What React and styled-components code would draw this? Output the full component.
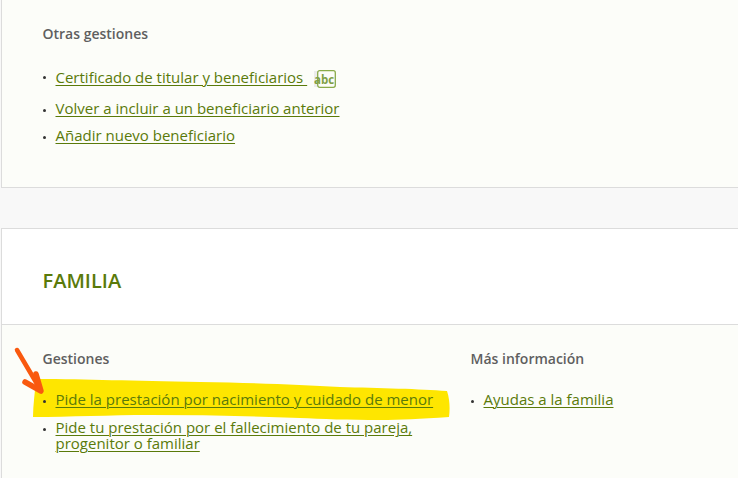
import React from "react";
import styled, { createGlobalStyle } from "styled-components";

const Global = createGlobalStyle`
  html, body { margin: 0; padding: 0; background: #f8f8f8; }
  body { font-family: "Open Sans", "Noto Sans", sans-serif; overflow: hidden; }
`;
const Page = styled.div`
  width: 738px;
  height: 478px;
  overflow: hidden;
  padding-left: 1px;
  box-sizing: border-box;
`;
const TopCard = styled.section`
  height: 188px;
  box-sizing: border-box;
  width: 760px;
  background: #fcfdf9;
  border-left: 1px solid #dcdcdc;
  border-bottom: 1px solid #dcdcdc;
  padding: 25px 0 0 40.5px;
`;
const Card = styled.section`
  margin-top: 40px;
  width: 760px;
  border: 1px solid #dcdcdc;
  border-right: 0;
  background: #fcfdf9;
  height: 300px;
`;
const CardHeader = styled.header`
  height: 96px;
  box-sizing: border-box;
  background: #fff;
  border-bottom: 1px solid #dcdcdc;
  padding: 38px 0 0 40.5px;
`;
const Title = styled.h2`
  margin: 0;
  font-size: 20px;
  line-height: 28px;
  font-weight: 600;
  color: #5a7a0a;
`;
const Columns = styled.div`
  position: relative;
  display: grid;
  grid-template-columns: 428px 1fr;
  padding: 25px 0 0 40.5px;
`;
const Column = styled.div`
  position: relative;
`;
const Heading = styled.h3`
  margin: 0;
  font-size: 14px;
  line-height: 18px;
  font-weight: 600;
  color: #5f5f5f;
`;
const List = styled.ul`
  list-style: none;
  margin: ${(p) => p.$top}px 0 0;
  padding: 0;
  width: ${(p) => p.$width}px;
  display: flex;
  flex-direction: column;
  gap: ${(p) => p.$gap}px;
`;
const Item = styled.li`
  position: relative;
  padding-left: 13px;
  padding-bottom: ${(p) => p.$extra || 0}px;
  font-size: 15px;
  line-height: 16px;
  color: #333;
  &::before {
    content: "";
    position: absolute;
    left: 0.5px;
    top: ${(p) => (p.$extra ? 7 : 9)}px;
    width: 3px;
    height: 3px;
    border-radius: 50%;
    background: #333;
  }
`;
const Link = styled.a`
  color: #5a7a0a;
  text-decoration: underline;
  text-underline-offset: 2px;
  text-decoration-thickness: 1px;
`;
const Abc = styled.svg`
  display: inline-block;
  vertical-align: -5px;
  margin-left: 6.5px;
`;
const Marker = styled.svg`
  position: absolute;
  left: -2px;
  top: 0;
  pointer-events: none;
`;

export default function App() {
  return (
    <Page>
      <Global />
      <TopCard>
        <Heading>Otras gestiones</Heading>
        <List $top={26} $gap={11} $width={500}>
          <Item $extra={1}>
            <Link href="#">Certificado de titular y beneficiarios&nbsp;</Link>
            <Abc width="22" height="18" viewBox="0 0 22 18">
              <rect x="0" y="1" width="9" height="16" fill="#ececec" />
              <rect x="3.7" y="0.7" width="17.6" height="16.6" rx="2" fill="#fcfdf9" stroke="#8aab4a" strokeWidth="1.3" />
              <text x="0" y="14" fontFamily="Open Sans" fontWeight="700" fontSize="11.5" fill="#7f9f45">abc</text>
            </Abc>
          </Item>
          <Item><Link href="#">Volver a incluir a un beneficiario anterior</Link></Item>
          <Item><Link href="#">Añadir nuevo beneficiario</Link></Item>
        </List>
      </TopCard>
      <Card>
        <CardHeader><Title>FAMILIA</Title></CardHeader>
        <Columns>
          <Marker width="470" height="150" viewBox="0 325 470 150">
            <path d="M36 379 C90 379 130 381 200 382 C260 383 300 385 340 387 C380 388 420 389 447 391 C450 400 450 410 449 417 C420 419 400 420 380 420 C350 420 320 419 300 418 C250 416 200 415 150 415 C110 415 70 417 33 417 C33 405 35 392 36 379 Z" fill="#fee600" />
            <path d="M17 350 L40 389" stroke="#f9590f" strokeWidth="4.5" strokeLinecap="round" fill="none" />
            <path d="M25 382 L41 391 L36 374" stroke="#f9590f" strokeWidth="5.5" strokeLinecap="round" strokeLinejoin="round" fill="none" />
          </Marker>
          <Column>
            <Heading>Gestiones</Heading>
            <List $top={23} $gap={12} $width={400}>
              <Item><Link href="#">Pide la prestación por nacimiento y cuidado de menor</Link></Item>
              <Item><Link href="#">Pide tu prestación por el fallecimiento de tu pareja, progenitor o familiar</Link></Item>
            </List>
          </Column>
          <Column>
            <Heading>Más información</Heading>
            <List $top={23} $gap={12} $width={260}>
              <Item><Link href="#">Ayudas a la familia</Link></Item>
            </List>
          </Column>
        </Columns>
      </Card>
    </Page>
  );
}
